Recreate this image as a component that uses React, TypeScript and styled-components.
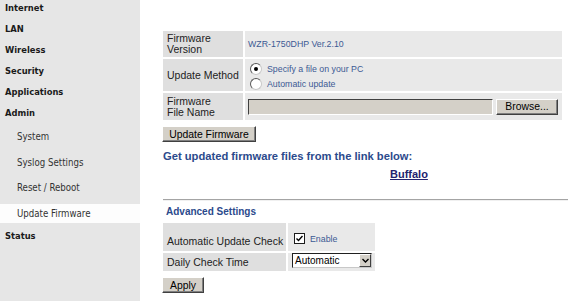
import styled, { createGlobalStyle } from "styled-components";

const GlobalStyle = createGlobalStyle`
  html, body, #root { height: 100%; }
  body {
    margin: 0;
    background: #fff;
    font-family: "Liberation Sans", Arial, sans-serif;
  }
`;

const Page = styled.div`
  display: flex;
  width: 100%;
  height: 301px;
  overflow: hidden;
`;

const Sidebar = styled.nav`
  width: 140px;
  flex-shrink: 0;
  background: #e6e6e6;
  font-family: "DejaVu Sans Condensed", "DejaVu Sans", sans-serif;
  font-stretch: semi-condensed;
`;

const MenuItem = styled.div`
  padding: 0 0 5px 5px;
  line-height: 16px;
  font-size: 9.3px;
  font-weight: bold;
  color: #1a1a1a;
`;

const SubMenu = styled.div`
  display: flex;
  flex-direction: column;
  gap: 6.5px;
  padding: 1px 0 5.5px;
`;

const SubItem = styled.div<{ $active?: boolean }>`
  height: 19px;
  line-height: 19px;
  padding-left: 17px;
  font-size: 9.6px;
  color: #333;
  background: ${(p) => (p.$active ? "#fdfdfd" : "transparent")};
`;

const Main = styled.main`
  flex: 1;
  min-width: 0;
  padding: 30px 0 0 22px;
  display: flex;
  flex-direction: column;
  align-items: flex-start;
`;

const Table = styled.div<{ $label: number; $width: number; $rows: string }>`
  display: grid;
  grid-template-columns: ${(p) => p.$label}px 1fr;
  grid-template-rows: ${(p) => p.$rows};
  gap: 2px;
  padding: 1px;
  width: ${(p) => p.$width}px;
  box-sizing: border-box;
  background: #fff;
`;

const LabelCell = styled.div<{ $bottom?: boolean }>`
  background: #dfdfdf;
  display: flex;
  align-items: ${(p) => (p.$bottom ? "flex-end" : "center")};
  padding: ${(p) => (p.$bottom ? "0 0 4px 4px" : "0 0 0 4px")};
  font-size: 10.5px;
  line-height: 11px;
  color: #222;
`;

const ValueCell = styled.div`
  background: #e9e9e9;
  display: flex;
  align-items: center;
  padding-left: 3px;
  font-size: 8.8px;
  color: #3c5a94;
`;

const RadioGroup = styled.div`
  display: flex;
  flex-direction: column;
  align-self: flex-start;
  padding: 2px 0 0 2px;
`;

const Option = styled.label`
  display: flex;
  align-items: center;
  gap: 5px;
  height: 15px;
`;

const Radio = styled.span<{ $checked?: boolean }>`
  width: 10px;
  height: 10px;
  border-radius: 50%;
  border: 1px solid;
  border-color: #5a5a5a #c8c8c8 #c8c8c8 #5a5a5a;
  background: #fff;
  display: flex;
  align-items: center;
  justify-content: center;

  &::after {
    content: "";
    width: 4px;
    height: 4px;
    border-radius: 50%;
    background: ${(p) => (p.$checked ? "#000" : "transparent")};
  }
`;

const FileRow = styled.div`
  display: flex;
  align-items: center;
  gap: 3px;
`;

const FileBox = styled.div`
  width: 245px;
  height: 16px;
  box-sizing: border-box;
  background: #d4d0c8;
  border: 1px solid;
  border-color: #404040 #fff #fff #404040;
`;

const Button = styled.button<{ $w: number }>`
  width: ${(p) => p.$w}px;
  height: 16px;
  padding: 0;
  background: #d4d0c8;
  border: 1px solid;
  border-color: #fff #404040 #404040 #fff;
  box-shadow: inset -1px -1px 0 #808080;
  font-family: "Liberation Sans", Arial, sans-serif;
  font-size: 10.4px;
  color: #000;
  line-height: 13px;
`;

const PageButton = styled(Button)<{ $mt: number }>`
  margin-top: ${(p) => p.$mt}px;
`;

const Notice = styled.div`
  margin-top: 7px;
  padding-left: 1px;
  line-height: 14px;
  font-size: 11.2px;
  font-weight: bold;
  color: #2b4a8c;
`;

const LinkRow = styled.a`
  margin: 4px 0 0 228px;
  line-height: 14px;
  font-size: 11px;
  font-weight: bold;
  color: #23236e;
  text-decoration: underline;
`;

const Divider = styled.hr`
  align-self: stretch;
  box-sizing: border-box;
  width: calc(100% - 1px);
  height: 2px;
  margin: 18px 0 0 1px;
  border: 0;
  border-top: 1px solid #a4a4a4;
  border-bottom: 1px solid #f0f0f0;
`;

const SectionTitle = styled.div`
  margin-top: 3.5px;
  padding-left: 4px;
  line-height: 13px;
  font-size: 10px;
  font-weight: bold;
  color: #2b4a8c;
`;

const SectionTable = styled(Table)`
  margin-top: 4.5px;
`;

const CheckRow = styled.label`
  display: flex;
  align-items: center;
  gap: 5px;
  align-self: flex-start;
  margin: 10px 0 0 3px;
`;

const CheckBox = styled.span`
  width: 9px;
  height: 9px;
  border: 1px solid #1c1c1c;
  background: #fff;
  display: flex;
  align-items: center;
  justify-content: center;
`;

const Select = styled.div`
  width: 80px;
  height: 15px;
  box-sizing: border-box;
  margin-left: 1px;
  align-self: flex-start;
  display: flex;
  background: #fff;
  border: 1px solid;
  border-color: #202020 #c8c8c8 #c8c8c8 #202020;
`;

const SelectText = styled.span`
  flex: 1;
  padding-left: 2px;
  font-size: 10px;
  line-height: 13px;
  color: #000;
`;

const SelectArrow = styled.span`
  width: 12px;
  background: #d4d0c8;
  border: 1px solid;
  border-color: #fff #404040 #404040 #fff;
  box-sizing: border-box;
  display: flex;
  align-items: center;
  justify-content: center;
`;

const subItems = ["System", "Syslog Settings", "Reset / Reboot", "Update Firmware"];

export default function App() {
  return (
    <>
      <GlobalStyle />
      <Page>
        <Sidebar>
          <MenuItem>Internet</MenuItem>
          <MenuItem>LAN</MenuItem>
          <MenuItem>Wireless</MenuItem>
          <MenuItem>Security</MenuItem>
          <MenuItem>Applications</MenuItem>
          <MenuItem>Admin</MenuItem>
          <SubMenu>
            {subItems.map((s) => (
              <SubItem key={s} $active={s === "Update Firmware"}>
                {s}
              </SubItem>
            ))}
          </SubMenu>
          <MenuItem>Status</MenuItem>
        </Sidebar>
        <Main>
          <Table $label={80} $width={401} $rows="26px 32px 27px">
            <LabelCell>
              Firmware
              <br />
              Version
            </LabelCell>
            <ValueCell>WZR-1750DHP Ver.2.10</ValueCell>
            <LabelCell>Update Method</LabelCell>
            <ValueCell>
              <RadioGroup>
                <Option>
                  <Radio $checked />
                  Specify a file on your PC
                </Option>
                <Option>
                  <Radio />
                  Automatic update
                </Option>
              </RadioGroup>
            </ValueCell>
            <LabelCell>
              Firmware
              <br />
              File Name
            </LabelCell>
            <ValueCell>
              <FileRow>
                <FileBox />
                <Button $w={62}>Browse...</Button>
              </FileRow>
            </ValueCell>
          </Table>
          <PageButton $w={94} $mt={5}>
            Update Firmware
          </PageButton>
          <Notice>Get updated firmware files from the link below:</Notice>
          <LinkRow href="#">Buffalo</LinkRow>
          <Divider />
          <SectionTitle>Advanced Settings</SectionTitle>
          <SectionTable $label={123} $width={214} $rows="28px 18px">
            <LabelCell $bottom>Automatic Update Check</LabelCell>
            <ValueCell>
              <CheckRow>
                <CheckBox>
                  <svg width="7" height="7" viewBox="0 0 7 7">
                    <path d="M0.5 3.5 L2.5 5.5 L6.5 1" fill="none" stroke="#000" strokeWidth="1.4" />
                  </svg>
                </CheckBox>
                Enable
              </CheckRow>
            </ValueCell>
            <LabelCell>Daily Check Time</LabelCell>
            <ValueCell>
              <Select>
                <SelectText>Automatic</SelectText>
                <SelectArrow>
                  <svg width="7" height="5" viewBox="0 0 7 5">
                    <path d="M0.5 1 L3.5 4 L6.5 1" fill="none" stroke="#000" strokeWidth="1.4" />
                  </svg>
                </SelectArrow>
              </Select>
            </ValueCell>
          </SectionTable>
          <PageButton $w={42} $mt={5}>
            Apply
          </PageButton>
        </Main>
      </Page>
    </>
  );
}
